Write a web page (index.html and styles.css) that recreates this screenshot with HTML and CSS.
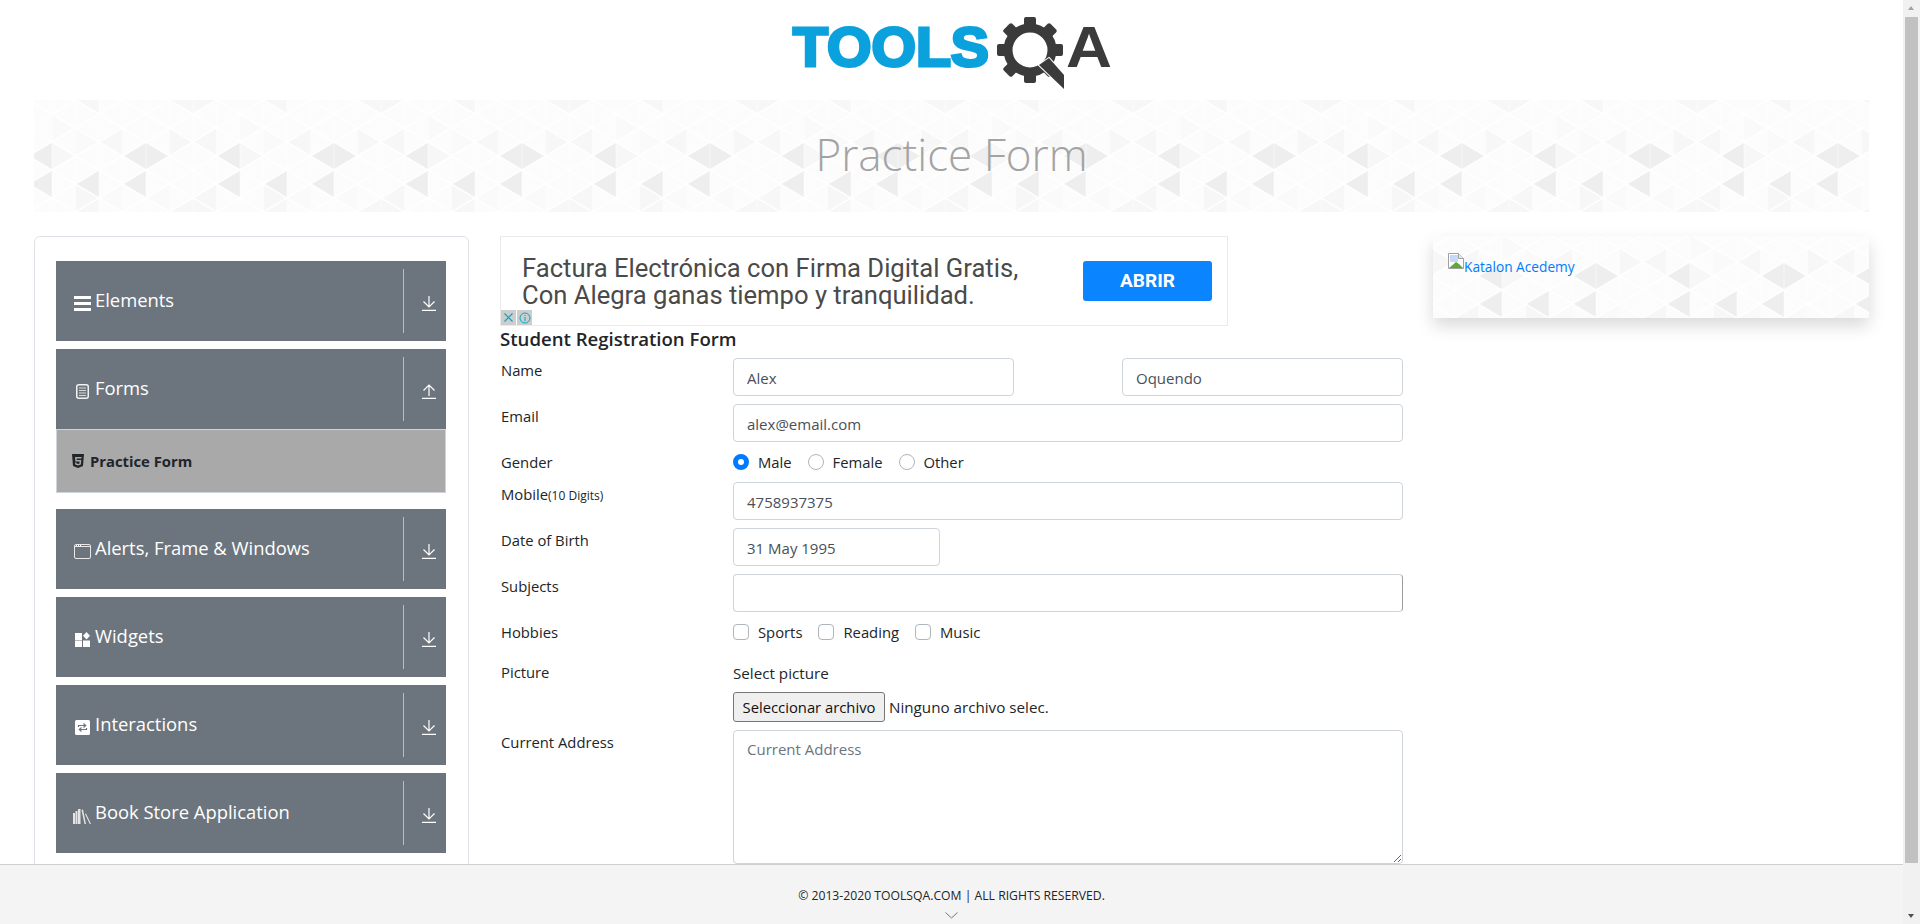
FILE: index.html
```html
<!DOCTYPE html>
<html lang="en">
<head>
  <meta charset="UTF-8">
  <title>Practice Form</title>
  <link rel="stylesheet" href="styles.css">
</head>
<body>
  <svg class="defs" width="0" height="0">
    <symbol id="arrow-down" viewBox="0 0 14 15">
      <path d="M7 0v11M1.500 5.500 7 11l5.500-5.500M0 14.300h14" fill="none" stroke="currentColor" stroke-width="1.200"/>
    </symbol>
    <symbol id="arrow-up" viewBox="0 0 14 15">
      <path d="M7 12V1M1.500 6.500 7 1l5.500 5.500M0 14.300h14" fill="none" stroke="currentColor" stroke-width="1.200"/>
    </symbol>
  </svg>

  <div class="app">
    <div class="page">
      <header class="logo-wrap">
        <svg class="logo" width="330" height="85" viewBox="790 10 330 85">
          <text class="logo-tools" x="796" y="66" textLength="196" lengthAdjust="spacingAndGlyphs">TOOLS</text>
          <g fill="#3b3b3b">
            <circle cx="1033" cy="50" r="22" fill="none" stroke="#3b3b3b" stroke-width="9"/>
            <rect x="1027" y="17" width="12" height="12" rx="2"/>
            <rect x="1027" y="17" width="12" height="12" rx="2" transform="rotate(45 1033 50)"/>
            <rect x="1027" y="17" width="12" height="12" rx="2" transform="rotate(90 1033 50)"/>
            <rect x="1027" y="17" width="12" height="12" rx="2" transform="rotate(135 1033 50)"/>
            <rect x="1027" y="17" width="12" height="12" rx="2" transform="rotate(180 1033 50)"/>
            <rect x="1027" y="17" width="12" height="12" rx="2" transform="rotate(225 1033 50)"/>
            <rect x="1027" y="17" width="12" height="12" rx="2" transform="rotate(270 1033 50)"/>
            <rect x="1027" y="17" width="12" height="12" rx="2" transform="rotate(315 1033 50)"/>
            <polygon points="1052,58 1067,75 1067,89 1042,65" stroke="#fff" stroke-width="2" paint-order="stroke"/>
          </g>
          <text class="logo-a" x="1069" y="67" textLength="46" lengthAdjust="spacingAndGlyphs">A</text>
        </svg>
      </header>

      <div class="banner pattern">
        <h1 class="banner-title">Practice Form</h1>
      </div>

      <div class="content">
        <aside class="sidebar">
          <div class="group">
            <div class="group-header">
              <span class="group-icon">
                <svg width="17" height="15" viewBox="0 0 17 15"><path d="M0 1.500h17M0 7.500h17M0 13.500h17" stroke="#fff" stroke-width="3"/></svg>
              </span>
              <span class="group-title">Elements</span>
              <span class="group-arrow"><svg width="14" height="15"><use href="#arrow-down"/></svg></span>
            </div>
          </div>

          <div class="group">
            <div class="group-header">
              <span class="group-icon">
                <svg width="13" height="15" viewBox="0 0 13 15"><rect x=".75" y=".75" width="11.500" height="13.500" rx="2" fill="none" stroke="#f2f2f2" stroke-width="1.500"/><path d="M3 4h7M3 6.500h7M3 9h7M3 11.500h7" stroke="#d8d8d8"/></svg>
              </span>
              <span class="group-title">Forms</span>
              <span class="group-arrow"><svg width="14" height="15"><use href="#arrow-up"/></svg></span>
            </div>
            <div class="group-item">
              <svg width="12" height="14" viewBox="0 0 12 14"><path fill-rule="evenodd" d="M0 0h12l-1 12-5 2-5-2zM3 3l.4 4.500h4.200l-.1 2L6 10l-1.500-.5-.1-1H3l.2 2L6 11.500l2.800-1L9.300 6H4.700l-.1-1.500h4.900l.1-1.500z" fill="#212529"/></svg>
              <span>Practice Form</span>
            </div>
          </div>

          <div class="group">
            <div class="group-header">
              <span class="group-icon">
                <svg width="17" height="15" viewBox="0 0 17 15"><rect x=".5" y=".5" width="16" height="14" rx="1.500" fill="none" stroke="#e8e8e8"/><path d="M1 2.500h15" stroke="#e8e8e8"/><path d="M2 1.500h1M4 1.500h1M6 1.500h1" stroke="#fff"/></svg>
              </span>
              <span class="group-title">Alerts, Frame &amp; Windows</span>
              <span class="group-arrow"><svg width="14" height="15"><use href="#arrow-down"/></svg></span>
            </div>
          </div>

          <div class="group">
            <div class="group-header">
              <span class="group-icon">
                <svg width="15" height="15" viewBox="0 0 15 15" fill="#fff"><rect width="7" height="7" y="1"/><rect y="8.500" width="7" height="6.500"/><rect x="8" y="8.500" width="7" height="6.500"/><polygon points="11.500,0 15,3.800 11.500,7.500 8,3.800"/></svg>
              </span>
              <span class="group-title">Widgets</span>
              <span class="group-arrow"><svg width="14" height="15"><use href="#arrow-down"/></svg></span>
            </div>
          </div>

          <div class="group">
            <div class="group-header">
              <span class="group-icon">
                <svg width="15" height="15" viewBox="0 0 15 15"><rect width="15" height="15" rx="1.500" fill="#fff"/><path d="M3.500 7V5.500h7M8.500 3.500l2.200 2-2.200 2M11.500 8v1.500h-7M6.500 7.500l-2.200 2 2.200 2" fill="none" stroke="#6c757d" stroke-width="1.200"/></svg>
              </span>
              <span class="group-title">Interactions</span>
              <span class="group-arrow"><svg width="14" height="15"><use href="#arrow-down"/></svg></span>
            </div>
          </div>

          <div class="group">
            <div class="group-header">
              <span class="group-icon">
                <svg width="18" height="16" viewBox="0 0 18 16" fill="#e4e4e4"><rect y="5" width="2" height="11"/><rect x="2.500" y="3" width="2" height="13"/><rect x="5" y="1" width="2.500" height="15"/><polygon points="8.500,2 10,1.500 13,16 11.500,16"/><polygon points="12,6 13,5.500 18,16 16.800,16"/></svg>
              </span>
              <span class="group-title">Book Store Application</span>
              <span class="group-arrow"><svg width="14" height="15"><use href="#arrow-down"/></svg></span>
            </div>
          </div>
        </aside>

        <main class="main">
          <div class="ad">
            <div class="ad-text">Factura Electrónica con Firma Digital Gratis,<br>Con Alegra ganas tiempo y tranquilidad.</div>
            <div class="ad-button">ABRIR</div>
            <div class="ad-choices">
              <span class="ad-choice">
                <svg width="11" height="11" viewBox="0 0 11 11"><path d="M1.500 1.500l8 8M9.500 1.500l-8 8" stroke="#00a9c6" stroke-width="1.200"/></svg>
              </span>
              <span class="ad-choice">
                <svg width="12" height="12" viewBox="0 0 12 12"><circle cx="6" cy="6" r="5" fill="none" stroke="#00a9c6"/><path d="M6 5v4M6 3v1" stroke="#00a9c6"/></svg>
              </span>
            </div>
          </div>

          <h5 class="form-title">Student Registration Form</h5>

          <form class="form">
            <div class="row">
              <label class="row-label">Name</label>
              <div class="row-field split">
                <input class="text-input half" type="text" value="Alex">
                <input class="text-input half" type="text" value="Oquendo">
              </div>
            </div>
            <div class="row">
              <label class="row-label">Email</label>
              <div class="row-field"><input class="text-input" type="text" value="alex@email.com"></div>
            </div>
            <div class="row row-short">
              <label class="row-label">Gender</label>
              <div class="row-field options">
                <span class="option"><span class="radio checked"></span>Male</span>
                <span class="option"><span class="radio"></span>Female</span>
                <span class="option"><span class="radio"></span>Other</span>
              </div>
            </div>
            <div class="row">
              <label class="row-label">Mobile<small class="hint">(10 Digits)</small></label>
              <div class="row-field"><input class="text-input" type="text" value="4758937375"></div>
            </div>
            <div class="row">
              <label class="row-label">Date of Birth</label>
              <div class="row-field"><input class="text-input date" type="text" value="31 May 1995"></div>
            </div>
            <div class="row">
              <label class="row-label">Subjects</label>
              <div class="row-field"><input class="text-input subjects" type="text"></div>
            </div>
            <div class="row row-hobbies">
              <label class="row-label">Hobbies</label>
              <div class="row-field options">
                <span class="option"><span class="check"></span>Sports</span>
                <span class="option"><span class="check"></span>Reading</span>
                <span class="option"><span class="check"></span>Music</span>
              </div>
            </div>
            <div class="row">
              <label class="row-label">Picture</label>
              <div class="row-field">
                <div class="picture-label">Select picture</div>
                <div class="file-row">
                  <button class="file-button" type="button">Seleccionar archivo</button>
                  <span>Ninguno archivo selec.</span>
                </div>
              </div>
            </div>
            <div class="row">
              <label class="row-label">Current Address</label>
              <div class="row-field"><textarea class="text-input address" placeholder="Current Address"></textarea></div>
            </div>
          </form>
        </main>

        <aside class="promo pattern">
          <a class="promo-link" href="#">
            <svg width="16" height="16" viewBox="0 0 16 16"><path d="M.5.500h10l5 5v10H.5z" fill="#fff" stroke="#a0a0a0"/><path d="M10.500.500v5h5" fill="#e8e8e8" stroke="#a0a0a0"/><rect x="2" y="2" width="8" height="7" fill="#c5d9f5"/><path d="M1 15l7-6 3 2 4 4z" fill="#5fa83a"/></svg>Katalon Acedemy
          </a>
        </aside>
      </div>

      <footer class="footer">
        <span>© 2013-2020 TOOLSQA.COM | ALL RIGHTS RESERVED.</span>
        <svg class="footer-chevron" width="13" height="7" viewBox="0 0 13 7"><path d="M.5.500l6 5.500 6-5.500" fill="none" stroke="#777"/></svg>
      </footer>
    </div>

    <div class="scrollbar">
      <span class="scroll-up"></span>
      <span class="scroll-thumb"></span>
      <span class="scroll-down"></span>
    </div>
  </div>
</body>
</html>
```

FILE: styles.css
```css
* {
  box-sizing: border-box;
}
html, body {
  margin: 0;
  height: 100%;
}
body {
  font-family: "Open Sans", "Liberation Sans", sans-serif;
  font-size: 15px;
  line-height: 24px;
  color: #212529;
  background: #fff;
  overflow: hidden;
}
.defs {
  display: block;
  height: 0;
}
.app {
  display: flex;
  height: 924px;
}
.page {
  flex: 1;
  position: relative;
  overflow: hidden;
}

/* logo */
.logo-wrap {
  height: 100px;
  padding-top: 10px;
  display: flex;
  justify-content: center;
}
.logo {
  display: block;
}
.logo-tools {
  font-family: "Liberation Sans", sans-serif;
  font-weight: 700;
  font-size: 55px;
  fill: #0ba1dd;
  stroke: #0ba1dd;
  stroke-width: 3px;
}
.logo-a {
  font-family: "Liberation Sans", sans-serif;
  font-weight: 700;
  font-size: 57px;
  fill: #3b3b3b;
}

/* triangle background */
.pattern {
  background-color: #fcfcfc;
  background-image: url("data:image/svg+xml,%3Csvg xmlns='http://www.w3.org/2000/svg' width='188' height='112'%3E%3Cg fill='%23eeeeee'%3E%3Cpolygon points='112,42 112,70 88.5,56'/%3E%3Cpolygon points='112,42 112,70 135.5,56'/%3E%3Cpolygon points='18,42 18,70 -5.5,56'/%3E%3Cpolygon points='206,42 206,70 182.5,56'/%3E%3Cpolygon points='65,70 65,98 41.5,84'/%3E%3Cpolygon points='112,70 112,98 88.5,84'/%3E%3Cpolygon points='18,70 18,98 -5.5,84'/%3E%3Cpolygon points='206,70 206,98 182.5,84'/%3E%3C/g%3E%3Cg fill='%23f7f7f7'%3E%3Cpolygon points='18,42 18,70 41.5,56'/%3E%3Cpolygon points='135.5,28 135.5,56 159,42'/%3E%3Cpolygon points='182.5,28 182.5,56 159,42'/%3E%3Cpolygon points='41.5,84 41.5,112 65,98'/%3E%3Cpolygon points='182.5,84 182.5,112 159,98'/%3E%3Cpolygon points='88.5,28 88.5,56 65,42'/%3E%3Cpolygon points='65,-14 65,14 41.5,0'/%3E%3Cpolygon points='65,98 65,126 41.5,112'/%3E%3Cpolygon points='159,-14 159,14 135.5,0'/%3E%3Cpolygon points='159,98 159,126 135.5,112'/%3E%3Cpolygon points='159,-14 159,14 182.5,0'/%3E%3Cpolygon points='159,98 159,126 182.5,112'/%3E%3C/g%3E%3Cg fill='%23fafafa'%3E%3Cpolygon points='41.5,28 41.5,56 65,42'/%3E%3Cpolygon points='135.5,84 135.5,112 112,98'/%3E%3Cpolygon points='88.5,84 88.5,112 65,98'/%3E%3Cpolygon points='18,14 18,42 41.5,28'/%3E%3C/g%3E%3Cpath d='M-146.5 0l188 112M-99.5 0l188 112M-52.5 0l188 112M-5.5 0l188 112M41.5 0l188 112M88.5 0l188 112M135.5 0l188 112M182.5 0l188 112M-146.5 112l188-112M-99.5 112l188-112M-52.5 112l188-112M-5.5 112l188-112M41.5 112l188-112M88.5 112l188-112M135.5 112l188-112M182.5 112l188-112' stroke='%23fff' stroke-width='1.5' opacity='.9'/%3E%3Cpath d='M18 0v112M41.5 0v112M65 0v112M88.5 0v112M112 0v112M135.5 0v112M159 0v112M182.5 0v112' stroke='%23fff' opacity='.5'/%3E%3C/svg%3E");
}
.banner {
  height: 112px;
  margin: 0 34px;
  display: flex;
  align-items: center;
  justify-content: center;
}
.banner-title {
  margin: -4px 0 0;
  font-size: 44px;
  font-weight: 300;
  line-height: 60px;
  color: #a3a3a3;
}

.content {
  display: flex;
  align-items: flex-start;
  padding: 24px 34px 0;
}

/* left menu */
.sidebar {
  flex: none;
  width: 435px;
  padding: 24px 22px 24px 21px;
  border: 1px solid #dee2e6;
  border-radius: 6px;
}
.group {
  margin-bottom: 8px;
}
.group-header {
  display: flex;
  align-items: center;
  height: 80px;
  padding: 8px 0;
  color: #fff;
  background: #6c757d;
}
.group-icon {
  flex: none;
  width: 18px;
  margin: 5px 4px 0 17px;
  display: flex;
  justify-content: center;
}
.group-icon svg {
  display: block;
}
.group-title {
  flex: 1;
  font-size: 18.400px;
  margin-top: -2px;
}
.group-arrow {
  flex: none;
  align-self: stretch;
  width: 43px;
  padding: 27px 0 0 18px;
  border-left: 1px solid #b5bcc2;
}
.group-arrow svg {
  display: block;
}
.group-item {
  display: flex;
  align-items: center;
  gap: 6px;
  height: 64px;
  margin-bottom: 16px;
  padding-left: 15px;
  border: 1px solid #ced4da;
  background: #a9a9a9;
  font-size: 14.800px;
  font-weight: 700;
}

/* middle column */
.main {
  flex: none;
  width: 903px;
  margin: 0 30px 0 31px;
}
.ad {
  position: relative;
  width: 728px;
  height: 90px;
  padding: 0 15px 0 21px;
  border: 1px solid #eaeaea;
  display: flex;
  align-items: center;
  justify-content: space-between;
  font-family: Roboto, "Liberation Sans", sans-serif;
}
.ad-text {
  font-size: 25.600px;
  line-height: 27px;
  color: #4a4a4a;
  margin-top: 1px;
}
.ad-button {
  width: 129px;
  height: 40px;
  line-height: 39px;
  margin-top: -1px;
  text-align: center;
  font-size: 19px;
  font-weight: 700;
  color: #fff;
  background: #0a84ff;
  border-radius: 3px;
}
.ad-choices {
  position: absolute;
  left: 0;
  bottom: 0;
  display: flex;
  gap: 1px;
}
.ad-choice {
  width: 15px;
  height: 15px;
  background: #cdcdcd;
  display: flex;
  align-items: center;
  justify-content: center;
}
.form-title {
  margin: 1px 0 7px;
  font-size: 18.600px;
  font-weight: 600;
  line-height: 24px;
}
.row {
  display: flex;
  margin-bottom: 8px;
}
.row-short {
  height: 24px;
}
.row-hobbies {
  height: 32px;
}
.row-label {
  flex: none;
  width: 233px;
  padding-left: 1px;
  font-size: 14.800px;
}
.hint {
  font-size: 12px;
}
.row-field {
  flex: 1;
  min-width: 0;
}
.split {
  display: flex;
  justify-content: space-between;
}
.text-input {
  display: block;
  width: 100%;
  height: 38px;
  padding: 7px 12px 5px 13px;
  border: 1px solid #ced4da;
  border-radius: 4px;
  font: inherit;
  color: #495057;
  background: #fff;
}
.half {
  width: 281px;
}
.date {
  width: 207px;
}
.subjects {
  border-right-color: #9c9c9c;
}
.address {
  height: 134px;
  padding-top: 6px;
}
.address::placeholder {
  color: #6c757d;
}
.options {
  display: flex;
  align-items: flex-start;
  gap: 16px;
}
.option {
  display: flex;
  align-items: center;
  gap: 9px;
  font-size: 14.800px;
}
.radio,
.check {
  flex: none;
  width: 16px;
  height: 16px;
  background: #fff;
  border: 1px solid #adb5bd;
}
.radio {
  border-radius: 50%;
}
.check {
  border-radius: 4px;
}
.radio.checked {
  border: 5px solid #007bff;
}
.picture-label {
  font-size: 15.200px;
  margin-top: 1px;
  margin-bottom: 7px;
}
.file-row {
  display: flex;
  align-items: center;
  gap: 4px;
  height: 30px;
  font-size: 15.200px;
}
.file-button {
  width: 152px;
  height: 30px;
  padding: 0;
  border: 1px solid #767676;
  border-radius: 3px;
  background: #efefef;
  font-size: 14.800px;
  font-family: inherit;
  color: #111;
}

/* right column */
.promo {
  flex: none;
  width: 436px;
  height: 82px;
  padding: 17px 15px;
  background-position: 51px -16px;
  box-shadow: 0 8px 16px rgba(0, 0, 0, 0.15);
}
.promo-link {
  display: block;
  font-size: 13.700px;
  line-height: 16px;
  color: #007bff;
  text-decoration: none;
}
.promo-link svg {
  vertical-align: 3px;
}

.footer {
  position: absolute;
  left: 0;
  right: 0;
  bottom: 0;
  height: 60px;
  padding-top: 20px;
  display: flex;
  flex-direction: column;
  align-items: center;
  background: #f4f4f4;
  border-top: 1px solid #cfcfcf;
  font-size: 12.200px;
  line-height: 22px;
}
.footer-chevron {
  display: block;
  margin-top: 5px;
}

/* scrollbar drawn by hand so it always shows in the shot */
.scrollbar {
  flex: none;
  width: 17px;
  background: #f1f1f1;
  position: relative;
  padding: 17px 2px;
}
.scroll-thumb {
  display: block;
  height: 846px;
  background: #c1c1c1;
}
.scroll-up,
.scroll-down {
  position: absolute;
  left: 5px;
  width: 0;
  height: 0;
  border-left: 3.500px solid transparent;
  border-right: 3.500px solid transparent;
}
.scroll-up {
  top: 6px;
  border-bottom: 4px solid #a3a3a3;
}
.scroll-down {
  bottom: 6px;
  border-top: 4px solid #505050;
}
```
